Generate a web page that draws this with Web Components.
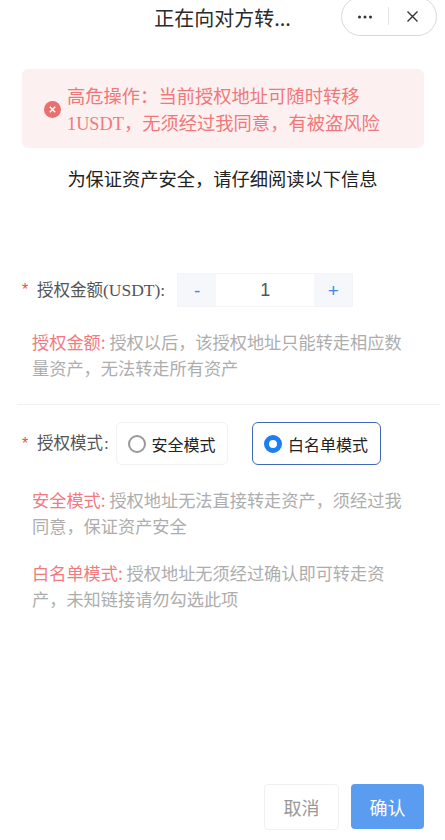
<!DOCTYPE html>
<html lang="zh"><head><meta charset="utf-8"><title>授权</title>
<style>
html,body{margin:0;padding:0;background:#fff}
body{font-family:"Liberation Serif","Noto Sans CJK SC",serif;color:#333;width:445px;height:840px;overflow:hidden}
</style></head><body>
<auth-page>
  <nav-bar slot="nav">正在向对方转...</nav-bar>
  <alert-box>高危操作：当前授权地址可随时转移<br>1USDT，无须经过我同意，有被盗风险</alert-box>
  <p-sub>为保证资产安全，请仔细阅读以下信息</p-sub>
  <form-row label="授权金额" suffix="(USDT):" style="--row-top:81px;--row-h:34px;--suffix:17.5px"><num-stepper value="1"></num-stepper></form-row>
  <help-text term="授权金额:" a="授权以后，该授权地址只能转走相应数" b="量资产，无法转走所有资产" style="--t:22px"></help-text>
  <h-rule></h-rule>
  <form-row label="授权模式" suffix=":" style="--row-top:17px;--row-h:43px;--suffix:17.5px;--gap:1px">
    <radio-chip>安全模式</radio-chip>
    <radio-chip checked style="margin-left:24px">白名单模式</radio-chip>
  </form-row>
  <help-text term="安全模式:" a="授权地址无法直接转走资产，须经过我" b="同意，保证资产安全" style="--t:22px"></help-text>
  <help-text term="白名单模式:" a="授权地址无须经过确认即可转走资" b="产，未知链接请勿勾选此项" style="--t:22px"></help-text>
  <foot-bar></foot-bar>
</auth-page>
<script>
function def(name,html,init){
  customElements.define(name,class extends HTMLElement{
    constructor(){super();const r=this.attachShadow({mode:"open"});r.innerHTML=html;}
    connectedCallback(){init&&init.call(this,this.shadowRoot);}
  });
}
const CJK='"Liberation Serif","Noto Sans CJK SC",serif';
const SANS='"Noto Sans CJK SC","Noto Sans",sans-serif';

def("auth-page",`<style>:host{display:flex;flex-direction:column;width:445px;height:840px;box-sizing:border-box}</style><slot name="nav"></slot><slot></slot>`);

def("nav-bar",`<style>
:host{display:flex;align-items:center;justify-content:center;height:36px;position:relative;font:20px/36px ${SANS};color:#2b2b2b;flex:none}
.cap{position:absolute;right:8px;top:-3px;width:96px;height:39px;box-sizing:border-box;border:1px solid #d9d9d9;border-radius:20px;display:flex;align-items:center;background:#fff}
.cell{flex:1;display:flex;align-items:center;justify-content:center;height:100%}
.cell.r{padding-right:1px}
.sep{width:1px;height:18px;background:#e2e2e2;flex:none;margin-top:-1px}
</style><slot></slot>
<div class="cap"><div class="cell"><svg width="16" height="6" viewBox="0 0 16 6"><circle cx="2.5" cy="3" r="1.5" fill="#333"/><circle cx="8" cy="3" r="1.5" fill="#333"/><circle cx="13.5" cy="3" r="1.5" fill="#333"/></svg></div><div class="sep"></div><div class="cell r"><svg width="13" height="13" viewBox="0 0 13 13"><path d="M1.5 1.5l10 10M11.5 1.5l-10 10" stroke="#333" stroke-width="1.4" fill="none"/></svg></div></div>`);

def("alert-box",`<style>
:host{display:flex;align-items:center;flex:none;box-sizing:border-box;margin:33px 21px 0 22px;height:79px;background:#fdf0f0;border-radius:6px;padding-left:22px;color:#f0787a;font:18.3px/27px ${CJK}}
svg{flex:none;margin-right:6px;margin-top:2px}
.t{margin-top:4px}
</style><svg width="17" height="17" viewBox="0 0 17 17"><circle cx="8.5" cy="8.5" r="8.5" fill="#e8706f"/><path d="M5.8 5.8l5.4 5.4M11.2 5.8l-5.4 5.4" stroke="#fff" stroke-width="1.4"/></svg><div class="t"><slot></slot></div>`);

def("p-sub",`<style>:host{display:block;flex:none;margin-top:17px;text-align:center;font:18.25px/27px ${SANS};color:#222}</style><slot></slot>`);

def("form-row",`<style>
:host{display:flex;align-items:center;flex:none;margin-top:var(--row-top);height:var(--row-h);padding-left:22px;font:16.5px/24px ${CJK};color:#555}
.star{color:#f04b4b;width:15px;flex:none;font:16px/24px "Liberation Sans",sans-serif}
.lab{flex:none;margin-right:7px;white-space:nowrap}
.suf{font-size:var(--suffix);margin-left:var(--gap,0)}
</style><span class="star">*</span><span class="lab"><span class="main"></span><span class="suf"></span></span><slot></slot>`,function(r){r.querySelector(".main").textContent=this.getAttribute("label");r.querySelector(".suf").textContent=this.getAttribute("suffix")});

def("num-stepper",`<style>
:host{display:flex;width:176px;height:34px;border:1px solid #f3f4f6;box-sizing:border-box;flex:none;margin-left:5px}
.b{width:38px;flex:none;background:#f5f7fa;color:#3f8ce8;display:flex;align-items:center;justify-content:center;font:19px/1 "Liberation Sans",sans-serif}
.v{flex:1;display:flex;align-items:center;justify-content:center;font:18px/1 "Liberation Sans",sans-serif;color:#555}
</style><div class="b">-</div><div class="v"></div><div class="b">+</div>`,function(r){r.querySelector(".v").textContent=this.getAttribute("value")});

def("help-text",`<style>
:host{display:block;flex:none;margin:var(--t) 0 0 32px;font:17.2px/25.5px ${SANS};color:#adadad;white-space:nowrap}
b{font-weight:400;color:#f27a80}
div{height:25.5px}
</style><div><b></b> <span class="a"></span></div><div class="l2"></div>`,function(r){r.querySelector("b").textContent=this.getAttribute("term");r.querySelector(".a").textContent=this.getAttribute("a");r.querySelector(".l2").textContent=this.getAttribute("b")});

def("h-rule",`<style>:host{display:block;flex:none;height:1px;background:#f0f0f0;margin:24px 5px 0 17px}</style>`);

def("radio-chip",`<style>
:host{display:inline-flex;align-items:center;flex:none;box-sizing:border-box;height:43px;padding:0 12px 0 11px;border:1px solid #f2f2f2;border-radius:6px;font:16px/24px ${SANS};color:#222}
:host([checked]){border-color:#4468b8}
.c{width:18px;height:18px;box-sizing:border-box;border:2px solid #999;border-radius:50%;margin-right:5.5px;flex:none}
:host([checked]) .c{border:5px solid #1a7ff0}
</style><span class="c"></span><slot></slot>`);

def("foot-bar",`<style>
:host{display:flex;flex:none;margin:auto 21px 10px 0;justify-content:flex-end;align-items:flex-start;gap:12px}
.b{box-sizing:border-box;border-radius:4px;display:flex;align-items:center;justify-content:center;font:18px/1 ${SANS}}
.x{width:75px;height:46px;border:1px solid #f0f0f0;color:#999;background:#fff}
.o{width:73px;height:45px;background:#5a9cf0;color:#fff}
</style><div class="b x">取消</div><div class="b o">确认</div>`);
</script>
</body></html>
